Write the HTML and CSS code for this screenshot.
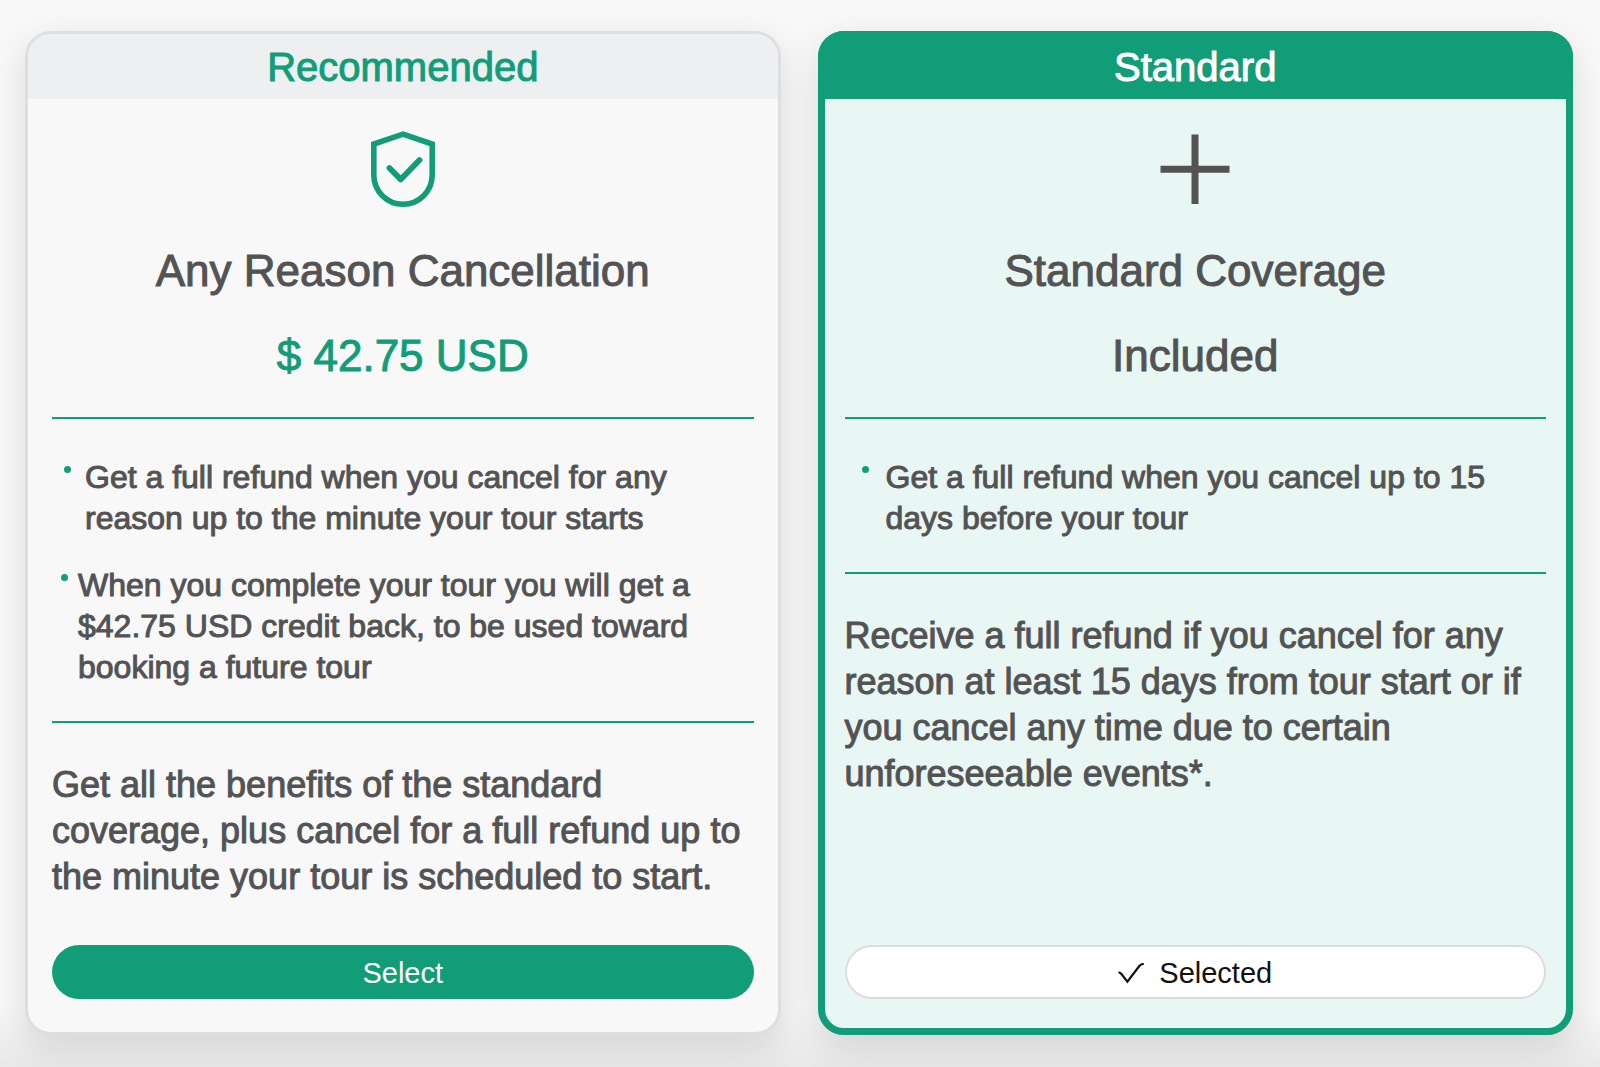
FILE: index.html
```html
<!DOCTYPE html>
<html lang="en">
<head>
    <meta charset="UTF-8">
    <meta name="viewport" content="width=device-width, initial-scale=1.0">
    <title>Cancellation Coverage</title>
    <link rel="stylesheet" href="styles.css">
</head>
<body>
    <main class="plans">
        <section class="plan">
            <h2 class="plan-label">Recommended</h2>
            <div class="plan-body">
                <svg class="plan-icon" width="66" height="78" viewBox="0 0 66 78" fill="none" stroke="currentColor" aria-hidden="true">
                    <path stroke-width="5.6" d="M33 4.2 62.2 14V45A29.2 29.2 0 0 1 3.8 45V14Z"/>
                    <path stroke-width="5.8" stroke-linecap="round" stroke-linejoin="round" d="M19.4 38 30.7 49.4 49.5 30"/>
                </svg>
                <h3 class="plan-name">Any Reason Cancellation</h3>
                <p class="plan-price">$ 42.75 USD</p>
                <hr>
                <ul class="perks">
                    <li>Get a full refund when you cancel for any reason up to the minute your tour starts</li>
                    <li class="tight">When you complete your tour you will get a $42.75 USD credit back, to be used toward booking a future tour</li>
                </ul>
                <hr>
                <p class="plan-text">Get all the benefits of the standard coverage, plus cancel for a full refund up to the minute your tour is scheduled to start.</p>
                <button type="button" class="btn">Select</button>
            </div>
        </section>

        <section class="plan selected">
            <h2 class="plan-label">Standard</h2>
            <div class="plan-body">
                <svg class="plan-icon" width="70" height="78" viewBox="0 0 70 78" fill="none" stroke="currentColor" stroke-width="7" aria-hidden="true">
                    <path d="M35 4.5V74M.5 39.3H69.5"/>
                </svg>
                <h3 class="plan-name">Standard Coverage</h3>
                <p class="plan-price">Included</p>
                <hr>
                <ul class="perks">
                    <li>Get a full refund when you cancel up to 15 days before your tour</li>
                </ul>
                <hr>
                <p class="plan-text">Receive a full refund if you cancel for any reason at least 15 days from tour start or if you cancel any time due to certain unforeseeable events*.</p>
                <button type="button" class="btn" aria-pressed="true">
                    <svg width="26" height="22" viewBox="0 0 26 22" fill="none" stroke="currentColor" stroke-width="2.2" aria-hidden="true">
                        <path d="M.5 9.3Q2 9.3 3 10.5L9.4 18.6 21.5 2.8Q23.2 1 25.8 1"/>
                    </svg>
                    Selected
                </button>
            </div>
        </section>
    </main>
</body>
</html>
```

FILE: styles.css
```css
* { box-sizing: border-box; }
body { margin: 0; background: #f8f8f8; color: #535353; font-family: "Liberation Sans", Arial, sans-serif; }
h2, h3, p, ul { margin: 0; padding: 0; font-weight: normal; }

.plans { display: grid; grid-template-columns: 1fr 1fr; gap: 37px; padding: 31px 27px 33px 25px; background: linear-gradient(to top, #e8e8e8, #f8f8f8 60px); }
.plan { --edge: 3px; display: flex; flex-direction: column; background: #f8f8f8; border: var(--edge) solid #dcdee2; border-radius: 26px; box-shadow: 0 12px 36px rgba(0, 0, 0, 0.12); }
.plan-label { display: flex; align-items: center; justify-content: center; height: 65px; padding-top: 2px; border-radius: 23px 23px 0 0; background: #edeff1; color: #129d79; font-size: 40px; -webkit-text-stroke: 1px; }
.plan-body { flex: 1; display: flex; flex-direction: column; padding: 31px calc(27px - var(--edge)) calc(36px - var(--edge)); }
.plan-icon { align-self: center; margin-bottom: 37px; color: #129d79; }
.plan-name, .plan-price { font-size: 44px; line-height: 52px; text-align: center; -webkit-text-stroke: 1px; }
.plan-name { margin-bottom: 33px; }
.plan-price { margin-bottom: 35px; color: #129d79; }
hr { width: 100%; height: 2px; margin: 0; border: 0; background: #129d79; }

.perks { display: flex; flex-direction: column; gap: 26px; margin: 38px 0 33px; list-style: none; font-size: 32px; line-height: 41px; -webkit-text-stroke: 1px; }
.perks li { display: flex; gap: 14px; padding: 0 12px; }
.perks li.tight { gap: 10px; padding: 0 9px; }
.perks li::before { content: ""; flex: none; width: 7px; height: 7px; margin-top: 9px; border-radius: 50%; background: #129d79; }

.plan-text { margin: 39px 0 45px; font-size: 36px; line-height: 46px; -webkit-text-stroke: 1px; }
.btn { display: flex; align-items: center; justify-content: center; gap: 15px; height: 54px; margin-top: auto; padding: 3px 0 0; border: 0; border-radius: 27px; background: #129d79; color: #fff; font: inherit; font-size: 29px; cursor: pointer; }

.selected { --edge: 7px; background: #e8f7f4; border-color: #129d79; }
/* the label covers the thick border, so the corners stay solid */
.selected .plan-label { height: 68px; margin: -7px -7px 0; padding-top: 5px; border-radius: 26px 26px 0 0; background: #129d79; color: #fff; }
.selected .plan-icon, .selected .plan-price { color: #535353; }
.selected .perks li { gap: 17px; padding: 0 17px; }
.selected .btn { border: 2px solid #dcdce0; background: #fff; color: #111; }
```
